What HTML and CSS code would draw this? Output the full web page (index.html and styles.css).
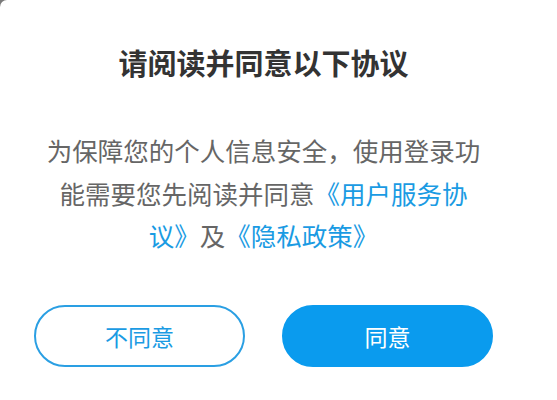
FILE: index.html
```html
<!DOCTYPE html>
<html lang="zh-CN">
<head>
<meta charset="utf-8">
<title>协议</title>
<link rel="stylesheet" href="styles.css">
</head>
<body>
<div class="dialog">
  <h1 class="title">请阅读并同意以下协议</h1>
  <p class="message">为保障您的个人信息安全，使用登录功能需要您先阅读并同意<a class="link">《用户服务协议》</a>及<a class="link">《隐私政策》</a></p>
  <div class="actions">
    <button class="btn btn-outline">不同意</button>
    <button class="btn btn-fill">同意</button>
  </div>
</div>
</body>
</html>
```
FILE: styles.css
```css
html, body {
  margin: 0;
  padding: 0;
  background: #7a7a7a;
}
body {
  width: 557px;
  height: 400px;
  overflow: hidden;
  font-family: "Noto Sans CJK SC", "Noto Sans", sans-serif;
}
.dialog {
  box-sizing: border-box;
  width: 557px;
  height: 400px;
  padding: 42px 30px 0 0;
  background: #ffffff;
  border-top-left-radius: 7px;
  display: flex;
  flex-direction: column;
  align-items: center;
}
.title {
  margin: 0;
  font-size: 29px;
  line-height: 40px;
  font-weight: 700;
  color: #333333;
  text-align: center;
  width: 527px;
}
.message {
  margin: 47px 0 0 0;
  width: 440px;
  font-size: 25.5px;
  line-height: 42.5px;
  color: #666666;
  text-align: center;
  text-spacing-trim: space-all;
}
.link {
  color: #1a9be3;
  text-decoration: none;
}
.actions {
  margin-top: 48px;
  display: flex;
  gap: 37px;
  justify-content: center;
  width: 527px;
}
.btn {
  box-sizing: border-box;
  width: 211px;
  height: 62px;
  border-radius: 31px;
  font-family: "Noto Sans CJK SC", "Noto Sans", sans-serif;
  font-size: 23px;
  padding: 0;
  cursor: pointer;
}
.btn-outline {
  background: #ffffff;
  border: 2px solid #2a9fe3;
  color: #1a9be3;
}
.btn-fill {
  background: #0a9bee;
  border: 2px solid #0a9bee;
  color: #ffffff;
}
```
